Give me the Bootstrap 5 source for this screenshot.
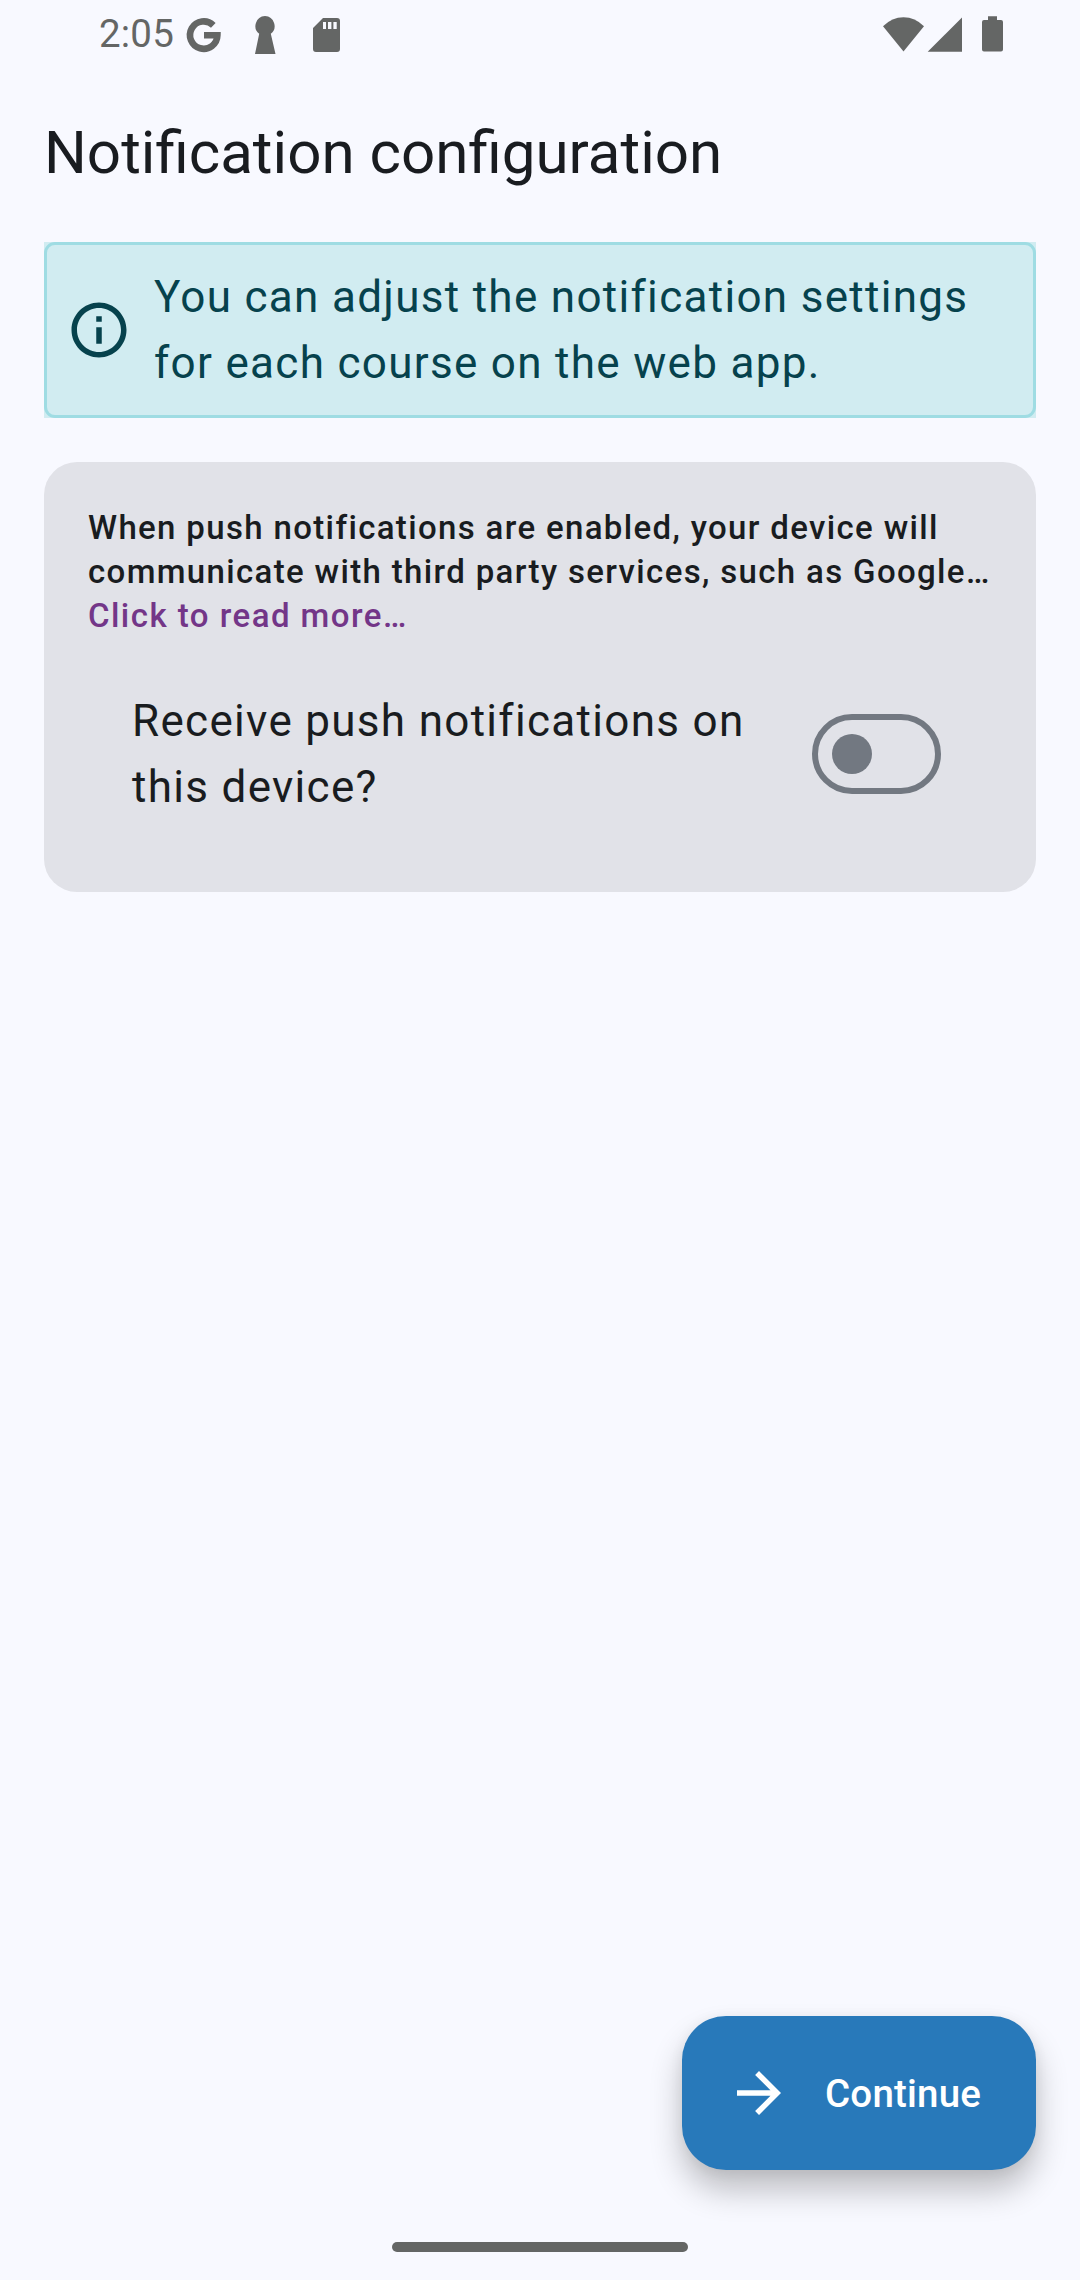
<!DOCTYPE html>
<html lang="en">
<head>
<meta charset="utf-8">
<meta name="viewport" content="width=device-width, initial-scale=1">
<title>Notification configuration</title>
<link href="https://cdn.jsdelivr.net/npm/bootstrap@5.3.0/dist/css/bootstrap.min.css" rel="stylesheet">
<style>
  body { background: #f8f9ff; color: #191c20; font-family: Roboto, sans-serif; }
  .screen { width: 1080px; height: 2280px; }
  .status-bar { height: 70px; padding: 0 76px 0 99px; color: #646665; }
  .status-bar svg { display: block; fill: currentColor; }
  .clock { font-size: 38.5px; line-height: 68px; width: 84px; letter-spacing: .2px; }
  .app-title { font-size: 60.1px; line-height: 77px; font-weight: 400; margin: 44px 0 51px; }
  .page { padding: 0 44px; }
  .info-box { background: #d1ecf1; color: #06424d; height: 176px; padding: 0 22px; gap: 22px; margin-bottom: 44px; position: relative; border: 0; border-radius: 0; }
  .info-box::after { content: ""; position: absolute; inset: 0; border: 3px solid #9fdce3; border-radius: 11px; }
  .body-large { font-size: 44px; line-height: 66px; letter-spacing: 1.31px; }
  .push-card { background: #e1e2e8; border: 0; border-radius: 33px; height: 430px; padding: 44px; color: #191c20; }
  .hint { font-size: 33px; line-height: 44px; font-weight: 500; letter-spacing: 1.345px; white-space: nowrap; }
  .hint a { color: #733688; text-decoration: none; letter-spacing: 1.46px; }
  .push-row { padding: 50px 51px 0 44px; }
  .push-switch.form-check-input { width: 129px; height: 80px; margin: 0; border: 6px solid #727881; border-radius: 40px; background: none; display: flex; align-items: center; padding-left: 14px; flex: none; }
  .push-switch::before { content: ""; width: 40px; height: 40px; border-radius: 50%; background: #727881; }
  .fab { --bs-btn-color: #fff; --bs-btn-bg: #2879ba; --bs-btn-border-width: 0; width: 354px; height: 154px; border-radius: 44px; padding: 0 0 0 44px; gap: 33px; font-size: 38.5px; font-weight: 500; letter-spacing: .2px; box-shadow: 0 20px 32px rgba(0,0,0,.24), 0 2px 14px rgba(0,0,0,.06); }
  .fab span { padding-top: 1px; }
  .home-zone { height: 110px; padding-top: 72px; }
  .home-bar { width: 296px; height: 10px; border-radius: 5px; background: #646665; }
</style>
</head>
<body>
<div class="screen d-flex flex-column">
  <header class="status-bar d-flex align-items-start justify-content-between">
    <div class="d-flex">
      <span class="clock">2:05</span>
      <svg width="160" height="70" viewBox="183 0 160 70">
        <path d="M213.300 25.300A13.700 13.700 0 1 0 217.400 35.300H204" fill="none" stroke="currentColor" stroke-width="6.600"/>
        <path d="M265 16a10 10 0 0 1 5.800 17.800L275.500 54H255l4.200-20.200A10 10 0 0 1 265 16z"/>
        <path fill-rule="evenodd" d="M323 18h14a3 3 0 0 1 3 3v28a3 3 0 0 1-3 3h-21a3 3 0 0 1-3-3V28zM323 22v7h3v-7zM328 22v7h3.400v-7zM333.400 22v7h3.300v-7z"/>
      </svg>
    </div>
    <svg width="124" height="70" viewBox="880 0 124 70">
      <path d="M883 26.300Q892 17.300 903.500 17.300T924 26.300L903.500 51.500z"/>
      <path d="M962 17.500V51.700H927.700z"/>
      <path d="M988 16.300h9V20h4a2 2 0 0 1 2 2v27.600a2 2 0 0 1-2 2h-17a2 2 0 0 1-2-2V22a2 2 0 0 1 2-2h4z"/>
    </svg>
  </header>

  <main class="page flex-grow-1 d-flex flex-column">
    <h1 class="app-title">Notification configuration</h1>

    <div class="info-box alert d-flex align-items-center body-large" role="alert">
      <svg class="flex-shrink-0" width="66" height="66" viewBox="0 0 24 24" fill="currentColor"><path d="M11 7h2v2h-2zm0 4h2v6h-2zm1-9C6.480 2 2 6.480 2 12s4.480 10 10 10 10-4.480 10-10S17.520 2 12 2zm0 18c-4.410 0-8-3.590-8-8s3.590-8 8-8 8 3.590 8 8-3.590 8-8 8z"/></svg>
      <div>You can adjust the notification settings<br>for each course on the web app.</div>
    </div>

    <section class="push-card card">
      <div class="hint">When push notifications are enabled, your device will<br>communicate with third party services, such as Google…<br><a href="#">Click to read more…</a></div>
      <div class="push-row d-flex align-items-center justify-content-between">
        <div class="body-large">Receive push notifications on<br>this device?</div>
        <div class="push-switch form-check-input" role="switch" aria-checked="false"></div>
      </div>
    </section>

    <button type="button" class="fab btn d-flex align-items-center mt-auto ms-auto">
      <svg width="66" height="66" viewBox="0 0 24 24" fill="currentColor"><path d="M12 4l-1.410 1.410L16.170 11H4v2h12.170l-5.580 5.590L12 20l8-8z"/></svg>
      <span>Continue</span>
    </button>
  </main>

  <footer class="home-zone d-flex justify-content-center"><div class="home-bar"></div></footer>
</div>
<script src="https://cdn.jsdelivr.net/npm/bootstrap@5.3.0/dist/js/bootstrap.bundle.min.js"></script>
</body>
</html>
